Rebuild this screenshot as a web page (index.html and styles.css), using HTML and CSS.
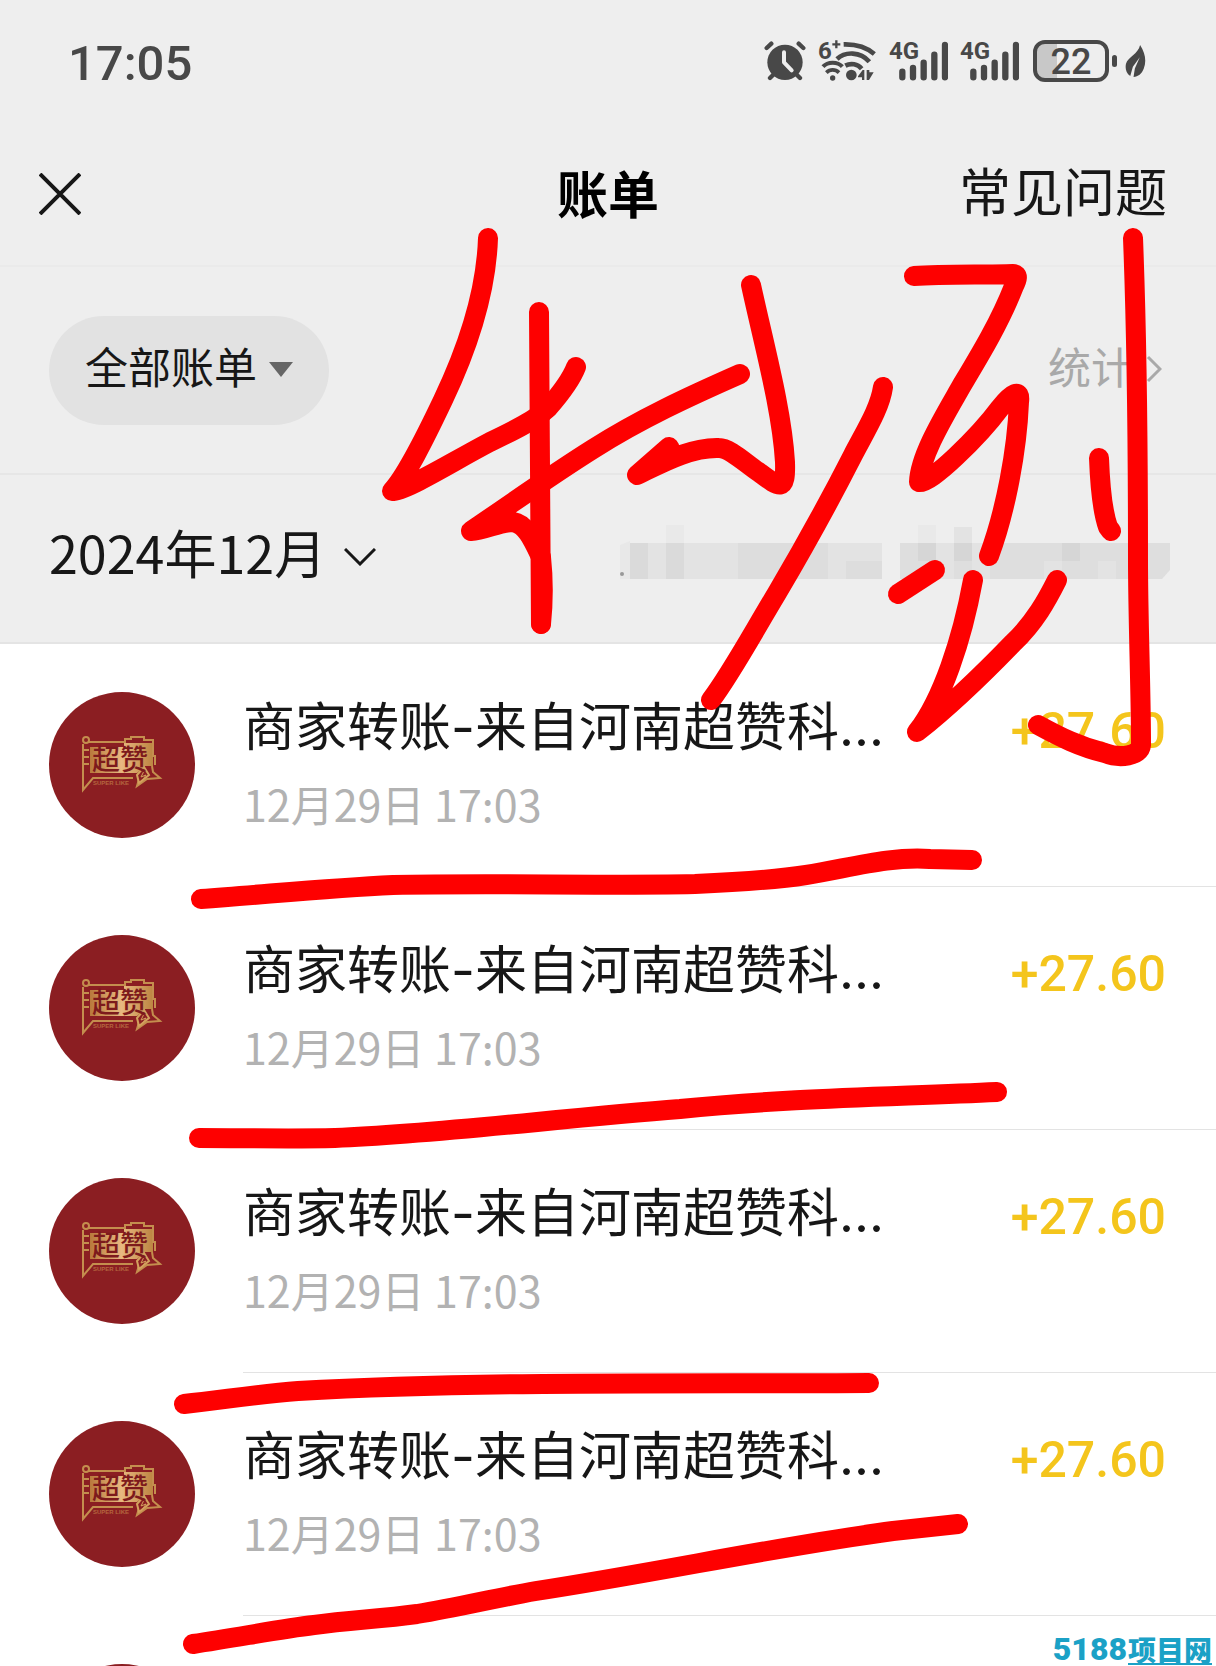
FILE: index.html
```html
<!DOCTYPE html>
<html lang="zh-CN">
<head>
    <meta charset="UTF-8">
    <meta name="viewport" content="width=device-width, initial-scale=1.0">
    <title>账单</title>
    <link rel="stylesheet" href="styles.css">
</head>
<body>
    <!-- Shared symbols -->
    <svg class="symbols" aria-hidden="true">
        <symbol id="signal" viewBox="0 0 171 126">
            <path d="M34 95V112M66 84V112M98 68V112M130 44V112M162 15V112" fill="none" stroke="currentColor" stroke-width="19" stroke-linecap="round"/>
        </symbol>
        <symbol id="logo" viewBox="0 0 146 146">
            <defs>
                <linearGradient id="gold" x1="0" y1="0" x2="1" y2="0">
                    <stop offset="0" stop-color="#b9793c"/>
                    <stop offset="0.5" stop-color="#e8b880"/>
                    <stop offset="1" stop-color="#bd8542"/>
                </linearGradient>
            </defs>
            <path d="M41 55H75V51H104V74L96 74L88 81H41Z" fill="url(#gold)"/>
            <g fill="none" stroke="#c48e4e" stroke-width="2">
                <circle cx="37" cy="48" r="3"/>
                <path d="M40 50H76V47H82V45H95V48H104V64H106V73"/>
                <path d="M34 52V98L44 86H84M35 58H40M35 65H40M35 72H40"/>
                <path d="M103 74L104 80L111 86L98 87L88 94L90 87"/>
            </g>
            <path d="M95 75L88 83L90 91L100 83Z" fill="#8b1e22" stroke="#d3a15e" stroke-width="2"/>
            <path d="M95 79L92 85L97 83L93 89" fill="none" stroke="#d3a15e" stroke-width="1"/>
        </symbol>
    </svg>

    <div class="screen">
        <header class="status-bar">
            <span class="time">17:05</span>
            <div class="status-icons">
                <svg class="icon-alarm" viewBox="0 0 126 126" role="img" aria-label="闹钟">
                    <circle cx="63" cy="67" r="53" fill="currentColor"/>
                    <g fill="none" stroke="currentColor" stroke-width="13" stroke-linecap="round">
                        <path d="M8 24L22 11M104 11L118 24M18 114L30 102M108 114L96 102"/>
                    </g>
                    <path d="M60 37V67L83 91" fill="none" stroke="#eee" stroke-width="12" stroke-linecap="round" stroke-linejoin="round"/>
                </svg>
                <div class="icon-wifi">
                    <svg viewBox="0 0 165 126" role="img" aria-label="WLAN">
                        <path d="M34 13H58M46 1V25" stroke="currentColor" stroke-width="7"/>
                        <g fill="none" stroke="currentColor" stroke-width="14">
                            <path d="M68 13C105 12 135 20 160 42"/>
                            <path d="M48 57C72 34 118 34 145 65"/>
                            <path d="M73 77C90 68 110 72 122 86"/>
                            <path d="M6 80C20 64 50 64 64 80" stroke-width="12"/>
                            <path d="M16 98C27 87 43 87 54 98" stroke-width="11"/>
                        </g>
                        <circle cx="35" cy="114" r="8" fill="currentColor"/>
                        <circle cx="91" cy="105" r="16" fill="currentColor"/>
                        <path d="M111 109L125 90H130V120H123V112H111ZM137 90H145V97H158L144 120H137Z" fill="currentColor"/>
                    </svg>
                    <span>6</span>
                </div>
                <div class="icon-signal">
                    <svg aria-hidden="true"><use href="#signal"/></svg>
                    <span>4G</span>
                </div>
                <div class="icon-signal">
                    <svg aria-hidden="true"><use href="#signal"/></svg>
                    <span>4G</span>
                </div>
                <div class="battery"><span>22</span></div>
                <svg class="icon-leaf" viewBox="0 0 64 100" role="img" aria-label="省电">
                    <path d="M46 0C62 25 66 49 57 72C51 88 40 96 26 97L30 71L45 37L24 66L16 94C3 86 0 71 3 57C9 36 40 28 46 0Z" fill="currentColor"/>
                </svg>
            </div>
        </header>

        <nav class="nav-bar">
            <button type="button" class="close" aria-label="关闭">
                <svg viewBox="0 0 42 42"><path d="M1 1L41 41M41 1L1 41" fill="none" stroke="currentColor" stroke-width="4"/></svg>
            </button>
            <h1>账单</h1>
            <a href="#" class="help">常见问题</a>
        </nav>

        <div class="filter-bar">
            <button type="button" class="pill">
                全部账单
                <svg viewBox="0 0 24 15"><path d="M0 0H24L12 15Z" fill="#666"/></svg>
            </button>
            <a href="#" class="stats">
                统计
                <svg viewBox="0 0 16 28"><path d="M2 2L14 14L2 26" fill="none" stroke="currentColor" stroke-width="3"/></svg>
            </a>
        </div>

        <div class="month-bar">
            <button type="button" class="month">
                2024年12月
                <svg viewBox="0 0 32 18"><path d="M1 1L16 16L31 1" fill="none" stroke="currentColor" stroke-width="3"/></svg>
            </button>
            <!-- Monthly totals, masked -->
            <svg class="masked" viewBox="0 0 550 54" aria-hidden="true">
                <path d="M0 20L10 16V54H0Z" fill="#e8e8e8"/>
                <path d="M10 18H262V54H10Z" fill="#e3e3e3"/>
                <path d="M280 18H550V45L542 54H280Z" fill="#dedede"/>
                <path d="M46 0H64V18H46ZM298 0H316V18H298Z" fill="#e9e9e9"/>
                <path d="M334 2H352V18H334Z" fill="#e3e3e3"/>
                <path d="M10 18H28V54H10ZM46 18H64V54H46Z" fill="#dadada"/>
                <path d="M118 18H208V54H118ZM226 36H262V54H226Z" fill="#dddddd"/>
                <path d="M298 18H316V36H298ZM334 18H352V36H334ZM442 18H460V36H442Z" fill="#d6d6d6"/>
                <path d="M316 18H334V54H316ZM352 18H370V54H352ZM424 36H442V54H424ZM478 36H496V54H478Z" fill="#e3e3e3"/>
                <circle cx="2" cy="49" r="2" fill="#999"/>
            </svg>
        </div>

        <ul class="bills">
            <li class="bill">
                <div class="avatar">
                    <svg aria-hidden="true"><use href="#logo"/></svg>
                    <span class="logo-main">超赞</span>
                    <span class="logo-sub">SUPER LIKE</span>
                </div>
                <div class="bill-body">
                    <div class="bill-top">
                        <span class="title">商家转账-来自河南超赞科...</span>
                        <span class="amount">+27.60</span>
                    </div>
                    <time class="date">12月29日 17:03</time>
                </div>
            </li>
            <li class="bill">
                <div class="avatar">
                    <svg aria-hidden="true"><use href="#logo"/></svg>
                    <span class="logo-main">超赞</span>
                    <span class="logo-sub">SUPER LIKE</span>
                </div>
                <div class="bill-body">
                    <div class="bill-top">
                        <span class="title">商家转账-来自河南超赞科...</span>
                        <span class="amount">+27.60</span>
                    </div>
                    <time class="date">12月29日 17:03</time>
                </div>
            </li>
            <li class="bill">
                <div class="avatar">
                    <svg aria-hidden="true"><use href="#logo"/></svg>
                    <span class="logo-main">超赞</span>
                    <span class="logo-sub">SUPER LIKE</span>
                </div>
                <div class="bill-body">
                    <div class="bill-top">
                        <span class="title">商家转账-来自河南超赞科...</span>
                        <span class="amount">+27.60</span>
                    </div>
                    <time class="date">12月29日 17:03</time>
                </div>
            </li>
            <li class="bill">
                <div class="avatar">
                    <svg aria-hidden="true"><use href="#logo"/></svg>
                    <span class="logo-main">超赞</span>
                    <span class="logo-sub">SUPER LIKE</span>
                </div>
                <div class="bill-body">
                    <div class="bill-top">
                        <span class="title">商家转账-来自河南超赞科...</span>
                        <span class="amount">+27.60</span>
                    </div>
                    <time class="date">12月29日 17:03</time>
                </div>
            </li>
            <li class="bill">
                <div class="avatar"></div>
            </li>
        </ul>

        <!-- Red pen marks -->
        <svg class="marks" viewBox="0 0 1216 1666" aria-hidden="true">
            <path d="M488 238C486 300 463 358 443 400C424 440 406 476 392 491C406 491 450 463 490 442C515 430 535 420 548 408C562 392 571 380 576 367"/>
            <path d="M539 312L541 624"/>
            <path d="M740 374C690 396 640 419 593 449C550 476 505 508 471 531C485 530 500 522 513 522C526 524 533 540 541 557C544 585 543 605 541 624"/>
            <path d="M751 285C764 345 782 410 785 462C786 492 780 488 760 473C745 463 730 448 719 448C690 447 660 464 637 475L669 447L664 455"/>
            <path d="M883 387C880 408 866 430 853 455C827 506 800 554 777 593C750 638 730 675 711 700"/>
            <path d="M914 276C945 274 985 275 1013 274C1019 274 1017 280 1014 286C1000 322 980 355 962 385C945 415 920 455 919 482C930 485 980 435 1000 408C1012 393 1021 388 1019 402C1017 450 1006 510 989 556"/>
            <path d="M898 594L935 570"/>
            <path d="M973 580C962 640 942 700 917 732C945 710 985 672 1013 643C1035 622 1047 600 1057 580"/>
            <path d="M1099 458C1100 485 1102 510 1108 527L1111 531"/>
            <path d="M1133 238C1137 340 1138 440 1138 560C1138 620 1141 690 1141 745C1140 756 1120 759 1105 753C1080 747 1060 737 1038 725"/>
            <path d="M201 899C270 894 330 888 393 885C500 883 600 886 695 884C740 882 780 879 806 875C850 868 890 856 930 859L972 860"/>
            <path d="M199 1138C245 1138 290 1139 335 1138C440 1134 560 1118 680 1109C790 1098 890 1097 997 1092"/>
            <path d="M184 1404C222 1400 258 1394 298 1391C480 1381 680 1384 869 1383"/>
            <path d="M193 1644C240 1637 280 1629 314 1625C352 1620 380 1619 417 1614C460 1607 495 1598 536 1591C660 1572 780 1546 893 1531L958 1524"/>
        </svg>

        <div class="watermark"><span class="site-num">5188</span><span class="site-name">项目网</span></div>
    </div>
</body>
</html>
```
FILE: styles.css
```css
* {
    box-sizing: border-box;
}
body {
    margin: 0;
    background-color: #fff;
    color: #171717;
    font-family: "Noto Sans CJK SC", "Noto Sans", sans-serif;
}
svg {
    display: block;
}
button {
    border: none;
    padding: 0;
    background: none;
    color: inherit;
    font-family: inherit;
    cursor: pointer;
}
a {
    color: inherit;
    text-decoration: none;
}
.symbols {
    position: absolute;
    width: 0;
    height: 0;
}
.screen {
    position: relative;
    height: 100vh;
    overflow: hidden;
}

/* Status bar */
.status-bar {
    display: flex;
    justify-content: space-between;
    align-items: center;
    height: 122px;
    padding: 0 70px 0 68px;
    background-color: #eee;
    color: #484848;
    font-family: Roboto, sans-serif;
}
.time {
    padding-top: 4px;
    font-size: 49px;
    font-weight: 500;
}
.status-icons {
    display: flex;
    align-items: center;
    gap: 14px;
}
.icon-alarm {
    width: 42px;
    height: 42px;
}
.icon-wifi,
.icon-signal {
    position: relative;
    width: 57px;
    height: 42px;
}
.icon-wifi svg,
.icon-signal svg {
    width: 100%;
    height: 100%;
}
.icon-wifi span,
.icon-signal span {
    position: absolute;
    top: 0;
    left: -2px;
    font-size: 24px;
    font-weight: 700;
    line-height: 22px;
}
.battery {
    position: relative;
    width: 76px;
    height: 42px;
    margin-right: 2px;
    border: 4px solid #484848;
    border-radius: 12px;
    background: linear-gradient(to right, #c8c8c8 20px, transparent 20px);
    font-size: 36px;
    font-weight: 500;
    line-height: 36px;
    text-align: center;
}
.battery::after {
    content: "";
    position: absolute;
    top: 11px;
    right: -12px;
    width: 5px;
    height: 12px;
    border-radius: 3px;
    background-color: #484848;
}
.icon-leaf {
    width: 21px;
    height: 33px;
}

/* Navigation */
.nav-bar {
    display: grid;
    grid-template-columns: 1fr auto 1fr;
    align-items: center;
    height: 145px;
    padding: 0 39px;
    border-bottom: 2px solid #eaeaea;
    background-color: #eee;
}
.close {
    width: 42px;
    height: 42px;
}
.nav-bar h1 {
    margin: 0;
    padding-bottom: 4px;
    color: #000;
    font-size: 51px;
    font-weight: 700;
    line-height: 70px;
}
.help {
    justify-self: end;
    padding: 0 10px 8px 0;
    font-size: 52px;
    line-height: 70px;
}

/* Filters */
.filter-bar {
    display: flex;
    justify-content: space-between;
    align-items: center;
    height: 208px;
    padding: 0 54px 0 49px;
    border-bottom: 2px solid #e6e6e6;
    background-color: #eee;
}
.pill {
    display: flex;
    align-items: center;
    gap: 12px;
    height: 109px;
    padding: 0 36px 10px;
    border-radius: 55px;
    background-color: #e2e2e2;
    font-size: 43px;
    line-height: 60px;
}
.pill svg {
    width: 24px;
    height: 15px;
    margin-top: 8px;
}
.stats {
    display: flex;
    align-items: center;
    gap: 12px;
    padding-bottom: 10px;
    color: #a9a9a9;
    font-size: 43px;
    line-height: 60px;
}
.stats svg {
    width: 16px;
    height: 28px;
    margin-top: 8px;
}
.month-bar {
    display: flex;
    justify-content: space-between;
    align-items: center;
    height: 169px;
    padding: 0 46px 14px 49px;
    border-bottom: 2px solid #e4e4e4;
    background-color: #eee;
}
.month {
    display: flex;
    align-items: center;
    gap: 18px;
    font-size: 52px;
    line-height: 70px;
}
.month svg {
    width: 32px;
    height: 18px;
    margin-top: 10px;
}
.masked {
    width: 550px;
    height: 54px;
}

/* Bill list */
.bills {
    margin: 0;
    padding: 0;
    list-style: none;
}
.bill {
    display: flex;
    gap: 48px;
    padding-left: 49px;
}
.avatar {
    position: relative;
    flex: none;
    width: 146px;
    height: 146px;
    margin-top: 48px;
    border-radius: 50%;
    background-color: #8b1e22;
}
.avatar svg {
    width: 100%;
    height: 100%;
}
.logo-main {
    position: absolute;
    top: 51px;
    left: 43px;
    color: #7d1a1c;
    font-size: 28px;
    font-weight: 500;
    line-height: 30px;
}
.logo-sub {
    position: absolute;
    top: 88px;
    left: 44px;
    color: #b5663f;
    font-family: "Liberation Sans", sans-serif;
    font-size: 6px;
    font-weight: 700;
    line-height: 7px;
}
.bill-body {
    flex: 1;
    padding: 49px 50px 53px 0;
    border-bottom: 1px solid #e3e3e3;
}
.bill-top {
    display: flex;
    justify-content: space-between;
    line-height: 70px;
}
.title {
    font-family: Inter, "Noto Sans CJK SC", sans-serif;
    font-size: 52px;
}
.amount {
    color: #f4c51c;
    font-family: Roboto, sans-serif;
    font-size: 50px;
    font-weight: 500;
    line-height: 76px;
}
.date {
    display: block;
    margin-top: 4px;
    color: #b2b2b2;
    font-size: 43px;
    line-height: 60px;
}

/* Overlays */
.marks {
    position: absolute;
    top: 0;
    left: 0;
    width: 100%;
    fill: none;
    stroke: #fe0000;
    stroke-width: 20;
    stroke-linecap: round;
    stroke-linejoin: round;
    pointer-events: none;
}
.watermark {
    position: absolute;
    right: 4px;
    bottom: 1px;
    display: flex;
    align-items: flex-end;
    gap: 1px;
    color: #1ba1c6;
    font-weight: 900;
}
.site-num {
    font-family: Roboto, sans-serif;
    font-size: 32px;
    line-height: 32px;
}
.site-name {
    border-bottom: 2px solid #1ba1c6;
    font-size: 28px;
    line-height: 28px;
}
```
